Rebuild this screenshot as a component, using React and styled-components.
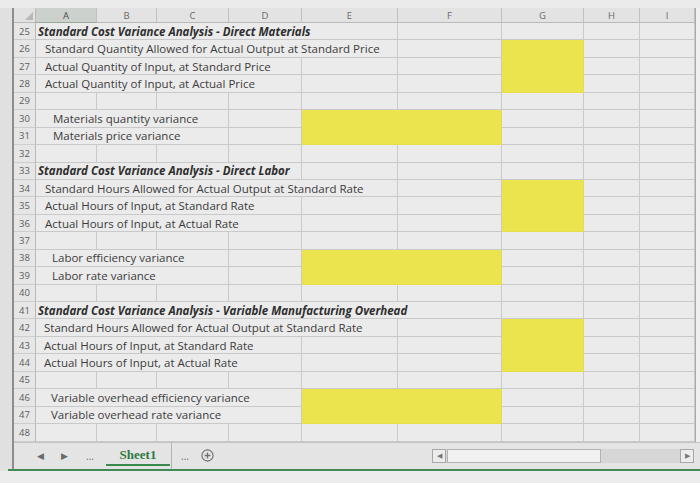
import React from "react";
import styled, { createGlobalStyle } from "styled-components";

const GlobalStyle = createGlobalStyle`
  html, body { margin: 0; padding: 0; background: #e4e4e4; }
  body { font-family: "Open Sans", "Liberation Sans", sans-serif; }
`;

const COLS = ["A", "B", "C", "D", "E", "F", "G", "H", "I"];
const COL_WIDTHS = [61, 60, 72, 73, 96, 104, 82, 56, 55];
const FIRST_ROW = 25;
const ROW_COUNT = 24;

// text cells: row, span from column A, indent, title?
const texts = [
  { row: 25, span: 5, indent: 2, title: true, text: "Standard Cost Variance Analysis - Direct Materials" },
  { row: 26, span: 5, indent: 9, text: "Standard Quantity Allowed for Actual Output at Standard Price" },
  { row: 27, span: 4, indent: 9, text: "Actual Quantity of Input, at Standard Price" },
  { row: 28, span: 4, indent: 9, text: "Actual Quantity of Input, at Actual Price" },
  { row: 30, span: 3, indent: 17, text: "Materials quantity variance" },
  { row: 31, span: 3, indent: 17, text: "Materials price variance" },
  { row: 33, span: 4, indent: 2, title: true, text: "Standard Cost Variance Analysis - Direct Labor" },
  { row: 34, span: 5, indent: 9, text: "Standard Hours Allowed for Actual Output at Standard Rate" },
  { row: 35, span: 4, indent: 9, text: "Actual Hours of Input, at Standard Rate" },
  { row: 36, span: 4, indent: 9, text: "Actual Hours of Input, at Actual Rate" },
  { row: 38, span: 3, indent: 16, text: "Labor efficiency variance" },
  { row: 39, span: 3, indent: 16, text: "Labor rate variance" },
  { row: 41, span: 6, indent: 2, title: true, text: "Standard Cost Variance Analysis - Variable Manufacturing Overhead" },
  { row: 42, span: 5, indent: 8, text: "Standard Hours Allowed for Actual Output at Standard Rate" },
  { row: 43, span: 4, indent: 8, text: "Actual Hours of Input, at Standard Rate" },
  { row: 44, span: 4, indent: 8, text: "Actual Hours of Input, at Actual Rate" },
  { row: 46, span: 4, indent: 15, text: "Variable overhead efficiency variance" },
  { row: 47, span: 4, indent: 15, text: "Variable overhead rate variance" },
];

// yellow answer blocks
const fills = [
  { row: 26, col: 6, rowSpan: 3, colSpan: 1 },
  { row: 30, col: 4, rowSpan: 2, colSpan: 2 },
  { row: 34, col: 6, rowSpan: 3, colSpan: 1 },
  { row: 38, col: 4, rowSpan: 2, colSpan: 2 },
  { row: 42, col: 6, rowSpan: 3, colSpan: 1 },
  { row: 46, col: 4, rowSpan: 2, colSpan: 2 },
];

const Frame = styled.div`
  width: 700px;
  height: 483px;
  display: flex;
  flex-direction: column;
  overflow: hidden;
  background: #e2e2e2;
`;

const TopStrip = styled.div`
  height: 8px;
  flex: none;
  background: #ebebeb;
`;

const Body = styled.div`
  flex: 1;
  display: flex;
  min-height: 0;
`;

const Gutter = styled.div`
  width: 12px;
  flex: none;
  background: #e0e0e0;
  border-right: 2px solid #8d8d8d;
`;

const Workbook = styled.div`
  flex: 1;
  display: flex;
  flex-direction: column;
  min-width: 0;
`;

const SheetArea = styled.div`
  display: flex;
  flex: none;
`;

const Grid = styled.div`
  display: grid;
  grid-template-columns: 22px ${COL_WIDTHS.map((w) => `${w}px`).join(" ")};
  grid-template-rows: 15px repeat(${ROW_COUNT}, 17.45px);
  background: #ebebeb;
  color: #3a3a3a;
`;

const Corner = styled.div`
  grid-row: 1;
  grid-column: 1;
  display: flex;
  align-items: flex-end;
  justify-content: flex-end;
  padding: 0 2px 2px 0;
  background: #e2e2e2;
  border-right: 1px solid #b9b9b9;
  border-bottom: 1px solid #b9b9b9;
  box-sizing: border-box;
`;

const ColHead = styled.div`
  grid-row: 1;
  grid-column: ${(p) => p.$col + 2};
  display: flex;
  align-items: center;
  justify-content: center;
  font-size: 9.5px;
  color: ${(p) => (p.$active ? "#4d4d4d" : "#6a6a6a")};
  background: ${(p) => (p.$active ? "#cdd1cd" : "#e3e3e3")};
  border-right: 1px solid #c0c0c0;
  border-bottom: 1px solid ${(p) => (p.$active ? "#9aa89a" : "#b9b9b9")};
  box-sizing: border-box;
`;

const RowHead = styled.div`
  grid-row: ${(p) => p.$row};
  grid-column: 1;
  display: flex;
  align-items: center;
  padding-left: 5px;
  font-size: 9.5px;
  color: #5c5c5c;
  background: #e6e6e6;
  border-right: 1px solid #b9b9b9;
  border-bottom: 1px solid #cdcdcd;
  box-sizing: border-box;
`;

const Cell = styled.div`
  grid-row: ${(p) => p.$row} / span ${(p) => p.$rowSpan || 1};
  grid-column: ${(p) => p.$col} / span ${(p) => p.$colSpan || 1};
  border-right: 1px solid #c9c9c9;
  border-bottom: 1px solid #c9c9c9;
  box-sizing: border-box;
`;

const TextCell = styled(Cell)`
  display: flex;
  align-items: center;
  padding-left: ${(p) => p.$indent}px;
  white-space: nowrap;
  overflow: hidden;
  font-size: 11.5px;
  font-weight: ${(p) => (p.$title ? 700 : 400)};
  font-style: ${(p) => (p.$title ? "italic" : "normal")};
  color: ${(p) => (p.$title ? "#2f2f2f" : "#3c3c3c")};
`;

const FillCell = styled(Cell)`
  background: #ebe44f;
  border-color: #e4dd4c;
`;

const VScroll = styled.div`
  flex: 1;
  background: #f0f0f0;
  border-left: 1px solid #a9a9a9;
`;

const TabBar = styled.div`
  flex: 1;
  display: flex;
  align-items: center;
  padding-left: 14px;
  background: #e4e4e4;
  border-top: 1px solid #c4c4c4;
  color: #6a6a6a;
`;

const NavItem = styled.div`
  width: ${(p) => p.$w}px;
  flex: none;
  display: flex;
  align-items: center;
  justify-content: center;
  font-size: ${(p) => p.$size || 9}px;
  align-self: stretch;
`;

const SheetTab = styled.div`
  width: 64px;
  flex: none;
  align-self: stretch;
  display: flex;
  align-items: center;
  justify-content: center;
  border-right: 1px solid #b4b4b4;
  margin-top: -1px;
  padding: 0 1px 0 2px;
`;

const SheetLabel = styled.span`
  flex: 1;
  text-align: center;
  font-family: "Liberation Serif", "DejaVu Serif", serif;
  font-weight: 700;
  font-size: 13px;
  color: #2f7a43;
  padding: 2px 0 1px;
  border-bottom: 2px solid #3a8a50;
`;

const HScroll = styled.div`
  margin-left: auto;
  margin-right: 6px;
  width: 262px;
  height: 14px;
  display: flex;
  align-items: stretch;
  background: #d6d6d6;
`;

const ScrollBtn = styled.div`
  width: 14px;
  flex: none;
  display: flex;
  align-items: center;
  justify-content: center;
  font-size: 7px;
  color: #777;
  background: #ececec;
  border: 1px solid #a8a8a8;
  box-sizing: border-box;
  margin-left: ${(p) => (p.$end ? "auto" : "0")};
`;

const Thumb = styled.div`
  width: 154px;
  flex: none;
  margin-left: 1px;
  background: #f1f1f1;
  border: 1px solid #b2b2b2;
  box-sizing: border-box;
`;

const GreenLine = styled.div`
  height: 2px;
  flex: none;
  margin-left: 8px;
  background: #3f8a55;
`;

const BottomStrip = styled.div`
  height: 12px;
  flex: none;
  background: #ececec;
`;

function PlusCircle() {
  return (
    <svg width="13" height="13" viewBox="0 0 13 13">
      <circle cx="6.5" cy="6.5" r="5.6" fill="none" stroke="#6f6f6f" strokeWidth="1.1" />
      <path d="M6.5 3.6v5.8M3.6 6.5h5.8" stroke="#6f6f6f" strokeWidth="1.3" />
    </svg>
  );
}

function CornerMark() {
  return (
    <svg width="8" height="8" viewBox="0 0 8 8">
      <path d="M8 0V8H0Z" fill="#b8b8b8" />
    </svg>
  );
}

function buildCells() {
  const covered = {};
  const mark = (r, c, rs, cs) => {
    for (let i = 0; i < rs; i++) for (let j = 0; j < cs; j++) covered[`${r + i}-${c + j}`] = true;
  };
  const out = [];
  fills.forEach((f, i) => {
    mark(f.row, f.col, f.rowSpan, f.colSpan);
    out.push(
      <FillCell
        key={`f${i}`}
        $row={f.row - FIRST_ROW + 2}
        $col={f.col + 2}
        $rowSpan={f.rowSpan}
        $colSpan={f.colSpan}
      />
    );
  });
  texts.forEach((t, i) => {
    mark(t.row, 0, 1, t.span);
    out.push(
      <TextCell
        key={`t${i}`}
        $row={t.row - FIRST_ROW + 2}
        $col={2}
        $colSpan={t.span}
        $indent={t.indent}
        $title={t.title}
      >
        {t.text}
      </TextCell>
    );
  });
  for (let r = FIRST_ROW; r < FIRST_ROW + ROW_COUNT; r++) {
    out.push(
      <RowHead key={`r${r}`} $row={r - FIRST_ROW + 2}>
        {r}
      </RowHead>
    );
    COLS.forEach((_, c) => {
      if (!covered[`${r}-${c}`]) {
        out.push(<Cell key={`c${r}-${c}`} $row={r - FIRST_ROW + 2} $col={c + 2} />);
      }
    });
  }
  return out;
}

export default function App() {
  return (
    <>
      <GlobalStyle />
      <Frame>
        <TopStrip />
        <Body>
          <Gutter />
          <Workbook>
            <SheetArea>
              <Grid>
                <Corner>
                  <CornerMark />
                </Corner>
                {COLS.map((c, i) => (
                  <ColHead key={c} $col={i} $active={i === 0}>
                    {c}
                  </ColHead>
                ))}
                {buildCells()}
              </Grid>
              <VScroll />
            </SheetArea>
            <TabBar>
              <NavItem $w={24}>◀</NavItem>
              <NavItem $w={24}>▶</NavItem>
              <NavItem $w={28} $size={10}>...</NavItem>
              <SheetTab>
                <SheetLabel>Sheet1</SheetLabel>
              </SheetTab>
              <NavItem $w={26} $size={10}>...</NavItem>
              <NavItem $w={18}>
                <PlusCircle />
              </NavItem>
              <HScroll>
                <ScrollBtn>◀</ScrollBtn>
                <Thumb />
                <ScrollBtn $end>▶</ScrollBtn>
              </HScroll>
            </TabBar>
          </Workbook>
        </Body>
        <GreenLine />
        <BottomStrip />
      </Frame>
    </>
  );
}
